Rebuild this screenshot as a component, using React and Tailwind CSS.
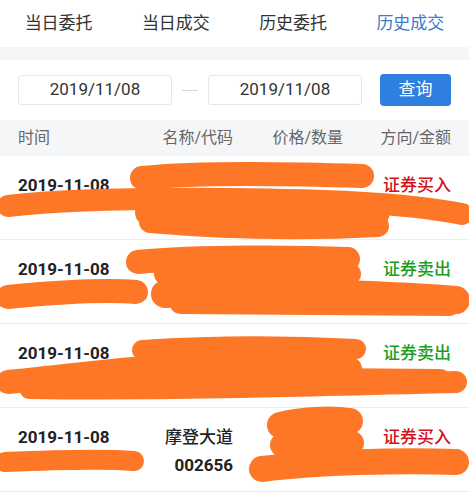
const font = { fontFamily: '"Roboto", "Noto Sans CJK SC", sans-serif' };

const tabs = ["当日委托", "当日成交", "历史委托", "历史成交"];

const rows = [
  { date: "2019-11-08", dir: "证券买入", color: "text-[#d4101d]" },
  { date: "2019-11-08", dir: "证券卖出", color: "text-[#1c9e22]" },
  { date: "2019-11-08", dir: "证券卖出", color: "text-[#1c9e22]" },
  { date: "2019-11-08", dir: "证券买入", color: "text-[#d4101d]", name: "摩登大道", code: "002656" },
];

// orange marker strokes drawn over the list
const scribbles = [
  { d: "M142 178 C200 172 300 174 362 176", w: 24 },
  { d: "M8 206 C60 200 140 198 230 199 S400 202 462 214", w: 22 },
  { d: "M150 212 L375 212", w: 30 },
  { d: "M150 222 C220 228 300 230 378 226", w: 22 },
  { d: "M138 262 C200 256 300 257 348 259", w: 24 },
  { d: "M165 274 L350 274", w: 22 },
  { d: "M8 297 C60 292 110 290 136 292", w: 24 },
  { d: "M165 294 C250 290 380 294 456 300", w: 28 },
  { d: "M180 304 L450 306", w: 20 },
  { d: "M142 350 C220 345 300 346 356 349", w: 20 },
  { d: "M8 382 C60 377 110 370 170 366 S300 367 350 369", w: 24 },
  { d: "M30 388 C150 390 300 386 456 382", w: 22 },
  { d: "M200 378 L440 380", w: 22 },
  { d: "M5 462 C50 460 100 458 134 461", w: 20 },
  { d: "M280 425 C300 420 330 418 350 421", w: 26 },
  { d: "M282 445 L352 443", w: 24 },
  { d: "M262 469 C320 462 400 460 456 462", w: 26 },
];

export default function App() {
  return (
    <div className="relative w-[469px] h-[500px] overflow-hidden bg-white" style={font}>
      <div className="grid grid-cols-4 h-[47px] items-center text-[17px] text-[#333]">
        {tabs.map((t, i) => (
          <div key={t} className={"text-center " + (i === 3 ? "text-[#3b7bd0]" : "")}>
            {t}
          </div>
        ))}
      </div>
      <div className="h-[13px] bg-[#f5f6f8]" />

      <div className="flex items-center h-[60px] pl-[18px] pr-[18px]">
        <div className="w-[154px] h-[30px] border border-[#e6e6e6] rounded-[3px] flex items-center justify-center text-[17px] text-[#333]">
          2019/11/08
        </div>
        <div className="w-[16px] h-px bg-[#d8d8d8] mx-[10px]" />
        <div className="w-[154px] h-[30px] border border-[#e6e6e6] rounded-[3px] flex items-center justify-center text-[17px] text-[#333]">
          2019/11/08
        </div>
        <button className="ml-auto w-[71px] h-[32px] rounded-[4px] bg-[#2f7fe0] text-white text-[17px]">
          查询
        </button>
      </div>

      <div className="grid grid-cols-[105px_110px_110px_108px] items-center h-[36px] px-[18px] bg-[#f5f6f8] text-[16px] text-[#666]">
        <div>时间</div>
        <div className="text-right">名称/代码</div>
        <div className="text-right">价格/数量</div>
        <div className="text-right">方向/金额</div>
      </div>

      {rows.map((r, i) => (
        <div
          key={i}
          className="grid grid-cols-[105px_110px_110px_108px] h-[84px] px-[18px] pt-[17px] border-b border-[#eeeeee] text-[17px] leading-[25px]"
        >
          <div className="font-bold text-[#222]">{r.date}</div>
          <div className="flex flex-col items-end gap-[3px] text-[#222]">
            {r.name && <div className="font-medium">{r.name}</div>}
            {r.code && <div className="font-bold">{r.code}</div>}
          </div>
          <div />
          <div className={"text-right font-medium " + r.color}>{r.dir}</div>
        </div>
      ))}

      <svg className="absolute inset-0 pointer-events-none" width="469" height="500" viewBox="0 0 469 500">
        {scribbles.map((s, i) => (
          <path
            key={i}
            d={s.d}
            fill="none"
            stroke="#fd7726"
            strokeWidth={s.w}
            strokeLinecap="round"
            strokeLinejoin="round"
          />
        ))}
      </svg>
    </div>
  );
}
